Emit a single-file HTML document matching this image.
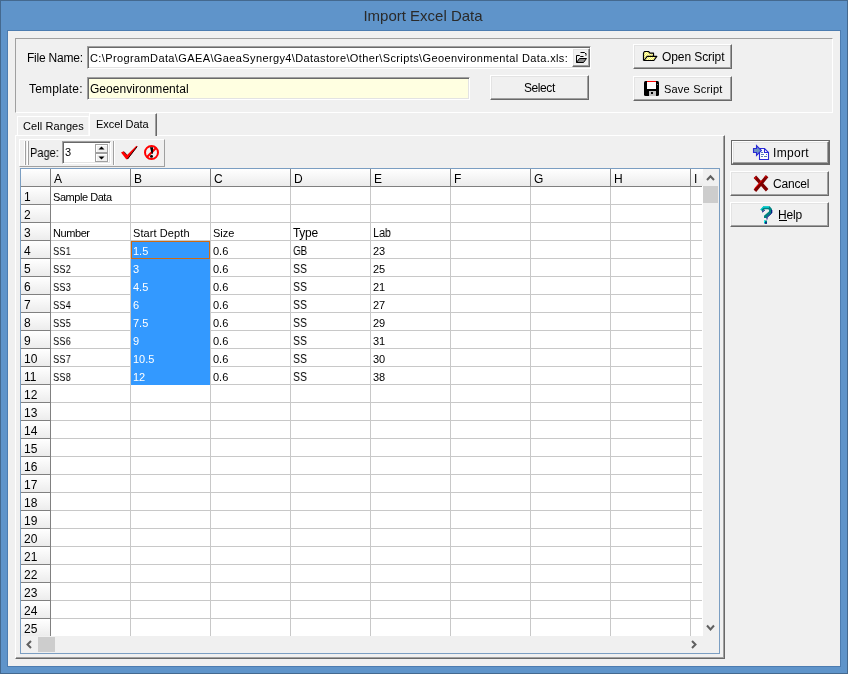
<!DOCTYPE html><html><head><meta charset="utf-8"><style>

*{margin:0;padding:0;box-sizing:border-box}
html,body{width:848px;height:674px;overflow:hidden;background:#f0f0f0}
body{position:relative;font-family:"Liberation Sans",sans-serif;font-size:11px;color:#000}
.abs{position:absolute}
.t{position:absolute;white-space:nowrap;will-change:transform}
.btn{position:absolute;background:#f0f0f0;border-style:solid;border-width:1px;border-color:#fff #696969 #696969 #fff;box-shadow:inset -1px -1px 0 #a0a0a0, inset 1px 1px 0 #e3e3e3}
.sunk{position:absolute;border-style:solid;border-width:1px;border-color:#a0a0a0 #fff #fff #a0a0a0;box-shadow:inset 1px 1px 0 #696969, inset -1px -1px 0 #e3e3e3}
svg{overflow:visible}

</style></head><body>
<div class="abs" style="left:0px;top:0px;width:848px;height:674px;background:#5f94ca;border:1px solid #44698f"></div>
<div class="abs" style="left:7px;top:30px;width:834px;height:637px;background:#f0f0f0;border:1px solid #4c7cb0"></div>
<div class="t" style="left:-1px;width:848px;top:7px;text-align:center;font-size:15px;line-height:18px;color:#2a2a2a">Import Excel Data</div>
<div class="abs" style="left:15px;top:38px;width:818px;height:75px;background:transparent;border-style:solid;border-width:1px;border-color:#a0a0a0 #fff #fff #a0a0a0"></div>
<div class="t" style="left:27px;top:52px;font-size:12px;line-height:12px;letter-spacing:-0.222px;color:#000;">File Name:</div>
<div class="t" style="left:29px;top:83px;font-size:12px;line-height:12px;letter-spacing:0.188px;color:#000;">Template:</div>
<div class="sunk" style="left:87px;top:46px;width:504px;height:23px;background:#fff"></div>
<div class="t" style="left:90px;top:53px;font-size:11px;line-height:11px;letter-spacing:0.384px;color:#000;">C:\ProgramData\GAEA\GaeaSynergy4\Datastore\Other\Scripts\Geoenvironmental Data.xls:</div>
<div class="btn" style="left:572px;top:48px;width:18px;height:19px"></div>
<svg class="abs" style="left:573px;top:49px;" width="16" height="16" viewBox="0 0 16 16">
<path d="M3.5 13.5 V6.5 H6.5 L7.5 7.5 H10.5" fill="none" stroke="#000" stroke-width="1"/>
<path d="M7.5 3.5 H11.5 L13 5" fill="none" stroke="#000" stroke-width="1"/>
<path d="M13.5 4 V6.5 L12 6.5 Z" fill="#000"/>
<path d="M3.5 13.5 L6.5 9.5 H13.5 L10.5 13.5 Z" fill="#8c8c8c" stroke="#000" stroke-width="1" stroke-linejoin="round"/>
</svg>
<div class="sunk" style="left:87px;top:77px;width:383px;height:23px;background:#ffffe1"></div>
<div class="t" style="left:90px;top:83px;font-size:12px;line-height:12px;letter-spacing:0.033px;color:#000;">Geoenvironmental</div>
<div class="btn" style="left:490px;top:75px;width:99px;height:25px"></div>
<div class="t" style="left:524px;top:82px;font-size:12px;line-height:12px;letter-spacing:-0.420px;color:#000;">Select</div>
<div class="btn" style="left:633px;top:44px;width:99px;height:25px"></div>
<div class="btn" style="left:633px;top:76px;width:99px;height:25px"></div>
<svg class="abs" style="left:642px;top:50px;" width="16" height="12" viewBox="0 0 16 12">
<defs><pattern id="dith" width="2" height="2" patternUnits="userSpaceOnUse"><rect width="2" height="2" fill="#f4f060"/><rect width="1" height="1" fill="#ffffd0"/><rect x="1" y="1" width="1" height="1" fill="#ffffd0"/></pattern></defs>
<path d="M1.5 10.5 V3 L2.5 1.5 H6.5 L8 3.2 H11.5 V6.5" fill="url(#dith)" stroke="#000" stroke-width="1.2" stroke-linejoin="round"/>
<path d="M2 10.5 L5.2 6.4 H14.8 L11.8 10.5 Z" fill="url(#dith)" stroke="#000" stroke-width="1.2" stroke-linejoin="round"/>
</svg>
<div class="t" style="left:662px;top:51px;font-size:12px;line-height:12px;letter-spacing:-0.090px;color:#000;">Open Script</div>
<svg class="abs" style="left:644px;top:81px;" width="15" height="15" viewBox="0 0 15 15">
<rect x="0" y="0" width="15" height="15" rx="1.5" fill="#000"/>
<rect x="3" y="0" width="9" height="1" fill="#ff0000"/>
<rect x="3" y="1" width="9" height="7" fill="#fff"/>
<rect x="5" y="10" width="7" height="5" fill="#c0c0c0"/>
<rect x="7" y="11" width="2" height="2" fill="#000"/>
<rect x="13" y="3" width="1" height="1" fill="#808080"/>
</svg>
<div class="t" style="left:664px;top:84px;font-size:11px;line-height:11px;letter-spacing:0.210px;color:#000;">Save Script</div>
<div class="abs" style="left:15px;top:135px;width:710px;height:524px;background:transparent;border-style:solid;border-width:1px;border-color:#fff #696969 #696969 #fff;box-shadow:inset -1px -1px 0 #a0a0a0"></div>
<div class="abs" style="left:17px;top:116px;width:72px;height:19px;background:#f0f0f0;border-style:solid;border-width:1px 1px 0 1px;border-color:#fff #fafafa #fff #fff"></div>
<div class="t" style="left:23px;top:121px;font-size:11px;line-height:11px;letter-spacing:0.090px;color:#000;">Cell Ranges</div>
<div class="abs" style="left:89px;top:113px;width:68px;height:23px;background:#f0f0f0;border-style:solid;border-width:1px 1px 0 1px;border-color:#fff #696969 #fff #fff;box-shadow:inset -1px 0 0 #a0a0a0"></div>
<div class="t" style="left:96px;top:119px;font-size:11px;line-height:11px;letter-spacing:-0.056px;color:#000;">Excel Data</div>
<div class="abs" style="left:19px;top:139px;width:146px;height:28px;background:transparent;border-style:solid;border-width:1px;border-color:#fff #a0a0a0 #a0a0a0 #fff"></div>
<div class="abs" style="left:24px;top:141px;width:1px;height:24px;background:#fff;"></div>
<div class="abs" style="left:25px;top:141px;width:1px;height:24px;background:#a0a0a0;"></div>
<div class="abs" style="left:27px;top:141px;width:1px;height:24px;background:#fff;"></div>
<div class="abs" style="left:28px;top:141px;width:1px;height:24px;background:#a0a0a0;"></div>
<div class="t" style="left:30px;top:147px;font-size:12px;line-height:12px;letter-spacing:0.000px;color:#000;transform:scaleX(0.9194);transform-origin:0px 0;">Page:</div>
<div class="sunk" style="left:62px;top:141px;width:49px;height:23px;background:#fff"></div>
<div class="t" style="left:65px;top:147px;font-size:11px;line-height:11px;letter-spacing:0.000px;color:#000;">3</div>
<div class="abs" style="left:95px;top:144px;width:13px;height:9px;background:#f0f0f0;border:1px solid #a0a0a0;box-shadow:inset 1px 1px 0 #fff"></div>
<svg class="abs" style="left:98px;top:146px;" width="7" height="4" viewBox="0 0 7 4"><path d="M0.5 3.5 L3.5 0.5 L6.5 3.5 Z" fill="#000"/></svg>
<div class="abs" style="left:95px;top:153px;width:13px;height:9px;background:#f0f0f0;border:1px solid #a0a0a0;box-shadow:inset 1px 1px 0 #fff"></div>
<svg class="abs" style="left:98px;top:156px;" width="7" height="4" viewBox="0 0 7 4"><path d="M0.5 0.5 L3.5 3.5 L6.5 0.5 Z" fill="#000"/></svg>
<div class="abs" style="left:113px;top:141px;width:1px;height:24px;background:#a0a0a0;"></div>
<div class="abs" style="left:114px;top:141px;width:1px;height:24px;background:#fff;"></div>
<svg class="abs" style="left:120px;top:145px;" width="18" height="15" viewBox="0 0 18 15">
<path d="M1 7.6 L3.6 6.2 L7 10 L16.4 0.8 L17.4 1.4 L7.6 14.2 L6.2 14.2 Z" fill="#ff0000"/>
<path d="M7.6 14 L17.2 1.6" stroke="#000" stroke-width="0.9" fill="none"/>
<path d="M4 6.6 L6.8 9.8" stroke="#000" stroke-width="0.7" fill="none"/>
</svg>
<svg class="abs" style="left:143px;top:144px;" width="17" height="17" viewBox="0 0 17 17">
<circle cx="8.5" cy="8.5" r="6.5" fill="none" stroke="#ff0000" stroke-width="2"/>
<path d="M13 4 L4 13" stroke="#ff0000" stroke-width="2.2"/>
<path d="M7 3.2 H10 L9.9 9.8 H8.7 Z" fill="#000"/>
<ellipse cx="8.5" cy="12.4" rx="1.5" ry="1.3" fill="#000"/>
</svg>
<div class="abs" style="left:731px;top:140px;width:99px;height:25px;background:transparent;border:1px solid #696969"></div>
<div class="btn" style="left:732px;top:141px;width:97px;height:23px"></div>
<svg class="abs" style="left:752px;top:144px;" width="19" height="17" viewBox="0 0 19 17">
<path d="M7.5 4.5 H12.5 L16.5 8.5 V15.5 H7.5 Z" fill="#fff" stroke="#2a2ad6" stroke-width="1.1" stroke-linejoin="miter"/>
<path d="M12.5 4.5 V8.5 H16.5" fill="none" stroke="#2a2ad6" stroke-width="1.1"/>
<rect x="9" y="8" width="2" height="1" fill="#5b7db8"/>
<rect x="9" y="10" width="3" height="1" fill="#5b7db8"/><rect x="14" y="10" width="1" height="1" fill="#5b7db8"/>
<rect x="9" y="12" width="2" height="1" fill="#5b7db8"/><rect x="12" y="12" width="3" height="1" fill="#5b7db8"/>
<path d="M1.5 4.5 H4.5 V1.6 L9.4 6.5 L4.5 11.4 V8.5 H1.5 Z" fill="#6d92c4" stroke="#2a2ad6" stroke-width="1.1" stroke-linejoin="miter"/>
</svg>
<div class="t" style="left:773px;top:147px;font-size:12px;line-height:12px;letter-spacing:0.300px;color:#000;">Import</div>
<div class="btn" style="left:730px;top:171px;width:99px;height:25px"></div>
<svg class="abs" style="left:753px;top:175px;" width="16" height="17" viewBox="0 0 16 17">
<path d="M3 3 L13 14" stroke="#800000" stroke-width="3.4" stroke-linecap="square"/>
<path d="M13 2.5 L3 14.5" stroke="#800000" stroke-width="3.4" stroke-linecap="square"/>
<path d="M1.8 4 L2.8 2.2 M1.5 13.5 L9 5.3 M11.8 1.5 L13.5 2" stroke="#ff0000" stroke-width="1"/>
</svg>
<div class="t" style="left:773px;top:178px;font-size:12px;line-height:12px;letter-spacing:-0.200px;color:#000;">Cancel</div>
<div class="btn" style="left:730px;top:202px;width:99px;height:25px"></div>
<svg class="abs" style="left:759px;top:206px;" width="14" height="19" viewBox="0 0 14 19">
<path d="M2.5 4.5 L5 1.8 H10 L11.5 3.5 V6 L6.5 10.5 V12" fill="none" stroke="#008080" stroke-width="3" stroke-linejoin="miter"/>
<path d="M1.5 4 L4.5 1 H10" fill="none" stroke="#00ffff" stroke-width="1"/>
<path d="M3 6.2 L5.8 4.2 M12.8 4 V7 L8 11.5 V13.5" fill="none" stroke="#000080" stroke-width="1"/>
<rect x="5" y="14.5" width="3" height="3" fill="#008080"/>
<rect x="5" y="14.5" width="1" height="2" fill="#00ffff"/><rect x="6" y="16.5" width="2" height="1.2" fill="#000080"/>
</svg>
<div class="t" style="left:778px;top:209px;font-size:12px;line-height:12px;letter-spacing:-0.167px;color:#000;">Help</div>
<div class="abs" style="left:779px;top:220px;width:8px;height:1px;background:#000;"></div>
<div class="abs" style="left:20px;top:168px;width:700px;height:486px;background:#f0f0f0;border:1px solid #7b9ec2"></div>
<div class="abs" style="left:21px;top:169px;width:682px;height:467px;background:#fff;"></div>
<div class="abs" style="left:21px;top:169px;width:682px;height:17px;background:linear-gradient(#ffffff,#ececec);"></div>
<div class="abs" style="left:21px;top:187px;width:29px;height:17px;background:linear-gradient(#ffffff,#ececec);"></div>
<div class="abs" style="left:21px;top:205px;width:29px;height:17px;background:linear-gradient(#ffffff,#ececec);"></div>
<div class="abs" style="left:21px;top:223px;width:29px;height:17px;background:linear-gradient(#ffffff,#ececec);"></div>
<div class="abs" style="left:21px;top:241px;width:29px;height:17px;background:linear-gradient(#ffffff,#ececec);"></div>
<div class="abs" style="left:21px;top:259px;width:29px;height:17px;background:linear-gradient(#ffffff,#ececec);"></div>
<div class="abs" style="left:21px;top:277px;width:29px;height:17px;background:linear-gradient(#ffffff,#ececec);"></div>
<div class="abs" style="left:21px;top:295px;width:29px;height:17px;background:linear-gradient(#ffffff,#ececec);"></div>
<div class="abs" style="left:21px;top:313px;width:29px;height:17px;background:linear-gradient(#ffffff,#ececec);"></div>
<div class="abs" style="left:21px;top:331px;width:29px;height:17px;background:linear-gradient(#ffffff,#ececec);"></div>
<div class="abs" style="left:21px;top:349px;width:29px;height:17px;background:linear-gradient(#ffffff,#ececec);"></div>
<div class="abs" style="left:21px;top:367px;width:29px;height:17px;background:linear-gradient(#ffffff,#ececec);"></div>
<div class="abs" style="left:21px;top:385px;width:29px;height:17px;background:linear-gradient(#ffffff,#ececec);"></div>
<div class="abs" style="left:21px;top:403px;width:29px;height:17px;background:linear-gradient(#ffffff,#ececec);"></div>
<div class="abs" style="left:21px;top:421px;width:29px;height:17px;background:linear-gradient(#ffffff,#ececec);"></div>
<div class="abs" style="left:21px;top:439px;width:29px;height:17px;background:linear-gradient(#ffffff,#ececec);"></div>
<div class="abs" style="left:21px;top:457px;width:29px;height:17px;background:linear-gradient(#ffffff,#ececec);"></div>
<div class="abs" style="left:21px;top:475px;width:29px;height:17px;background:linear-gradient(#ffffff,#ececec);"></div>
<div class="abs" style="left:21px;top:493px;width:29px;height:17px;background:linear-gradient(#ffffff,#ececec);"></div>
<div class="abs" style="left:21px;top:511px;width:29px;height:17px;background:linear-gradient(#ffffff,#ececec);"></div>
<div class="abs" style="left:21px;top:529px;width:29px;height:17px;background:linear-gradient(#ffffff,#ececec);"></div>
<div class="abs" style="left:21px;top:547px;width:29px;height:17px;background:linear-gradient(#ffffff,#ececec);"></div>
<div class="abs" style="left:21px;top:565px;width:29px;height:17px;background:linear-gradient(#ffffff,#ececec);"></div>
<div class="abs" style="left:21px;top:583px;width:29px;height:17px;background:linear-gradient(#ffffff,#ececec);"></div>
<div class="abs" style="left:21px;top:601px;width:29px;height:17px;background:linear-gradient(#ffffff,#ececec);"></div>
<div class="abs" style="left:21px;top:619px;width:29px;height:17px;background:linear-gradient(#ffffff,#ececec);"></div>
<div class="abs" style="left:130px;top:187px;width:1px;height:449px;background:#c8c8c8;"></div>
<div class="abs" style="left:130px;top:169px;width:1px;height:17px;background:#808080;"></div>
<div class="abs" style="left:210px;top:187px;width:1px;height:449px;background:#c8c8c8;"></div>
<div class="abs" style="left:210px;top:169px;width:1px;height:17px;background:#808080;"></div>
<div class="abs" style="left:290px;top:187px;width:1px;height:449px;background:#c8c8c8;"></div>
<div class="abs" style="left:290px;top:169px;width:1px;height:17px;background:#808080;"></div>
<div class="abs" style="left:370px;top:187px;width:1px;height:449px;background:#c8c8c8;"></div>
<div class="abs" style="left:370px;top:169px;width:1px;height:17px;background:#808080;"></div>
<div class="abs" style="left:450px;top:187px;width:1px;height:449px;background:#c8c8c8;"></div>
<div class="abs" style="left:450px;top:169px;width:1px;height:17px;background:#808080;"></div>
<div class="abs" style="left:530px;top:187px;width:1px;height:449px;background:#c8c8c8;"></div>
<div class="abs" style="left:530px;top:169px;width:1px;height:17px;background:#808080;"></div>
<div class="abs" style="left:610px;top:187px;width:1px;height:449px;background:#c8c8c8;"></div>
<div class="abs" style="left:610px;top:169px;width:1px;height:17px;background:#808080;"></div>
<div class="abs" style="left:690px;top:187px;width:1px;height:449px;background:#c8c8c8;"></div>
<div class="abs" style="left:690px;top:169px;width:1px;height:17px;background:#808080;"></div>
<div class="abs" style="left:50px;top:169px;width:1px;height:467px;background:#808080;"></div>
<div class="abs" style="left:51px;top:204px;width:651px;height:1px;background:#c8c8c8;"></div>
<div class="abs" style="left:21px;top:204px;width:29px;height:1px;background:#808080;"></div>
<div class="abs" style="left:51px;top:222px;width:651px;height:1px;background:#c8c8c8;"></div>
<div class="abs" style="left:21px;top:222px;width:29px;height:1px;background:#808080;"></div>
<div class="abs" style="left:51px;top:240px;width:651px;height:1px;background:#c8c8c8;"></div>
<div class="abs" style="left:21px;top:240px;width:29px;height:1px;background:#808080;"></div>
<div class="abs" style="left:51px;top:258px;width:651px;height:1px;background:#c8c8c8;"></div>
<div class="abs" style="left:21px;top:258px;width:29px;height:1px;background:#808080;"></div>
<div class="abs" style="left:51px;top:276px;width:651px;height:1px;background:#c8c8c8;"></div>
<div class="abs" style="left:21px;top:276px;width:29px;height:1px;background:#808080;"></div>
<div class="abs" style="left:51px;top:294px;width:651px;height:1px;background:#c8c8c8;"></div>
<div class="abs" style="left:21px;top:294px;width:29px;height:1px;background:#808080;"></div>
<div class="abs" style="left:51px;top:312px;width:651px;height:1px;background:#c8c8c8;"></div>
<div class="abs" style="left:21px;top:312px;width:29px;height:1px;background:#808080;"></div>
<div class="abs" style="left:51px;top:330px;width:651px;height:1px;background:#c8c8c8;"></div>
<div class="abs" style="left:21px;top:330px;width:29px;height:1px;background:#808080;"></div>
<div class="abs" style="left:51px;top:348px;width:651px;height:1px;background:#c8c8c8;"></div>
<div class="abs" style="left:21px;top:348px;width:29px;height:1px;background:#808080;"></div>
<div class="abs" style="left:51px;top:366px;width:651px;height:1px;background:#c8c8c8;"></div>
<div class="abs" style="left:21px;top:366px;width:29px;height:1px;background:#808080;"></div>
<div class="abs" style="left:51px;top:384px;width:651px;height:1px;background:#c8c8c8;"></div>
<div class="abs" style="left:21px;top:384px;width:29px;height:1px;background:#808080;"></div>
<div class="abs" style="left:51px;top:402px;width:651px;height:1px;background:#c8c8c8;"></div>
<div class="abs" style="left:21px;top:402px;width:29px;height:1px;background:#808080;"></div>
<div class="abs" style="left:51px;top:420px;width:651px;height:1px;background:#c8c8c8;"></div>
<div class="abs" style="left:21px;top:420px;width:29px;height:1px;background:#808080;"></div>
<div class="abs" style="left:51px;top:438px;width:651px;height:1px;background:#c8c8c8;"></div>
<div class="abs" style="left:21px;top:438px;width:29px;height:1px;background:#808080;"></div>
<div class="abs" style="left:51px;top:456px;width:651px;height:1px;background:#c8c8c8;"></div>
<div class="abs" style="left:21px;top:456px;width:29px;height:1px;background:#808080;"></div>
<div class="abs" style="left:51px;top:474px;width:651px;height:1px;background:#c8c8c8;"></div>
<div class="abs" style="left:21px;top:474px;width:29px;height:1px;background:#808080;"></div>
<div class="abs" style="left:51px;top:492px;width:651px;height:1px;background:#c8c8c8;"></div>
<div class="abs" style="left:21px;top:492px;width:29px;height:1px;background:#808080;"></div>
<div class="abs" style="left:51px;top:510px;width:651px;height:1px;background:#c8c8c8;"></div>
<div class="abs" style="left:21px;top:510px;width:29px;height:1px;background:#808080;"></div>
<div class="abs" style="left:51px;top:528px;width:651px;height:1px;background:#c8c8c8;"></div>
<div class="abs" style="left:21px;top:528px;width:29px;height:1px;background:#808080;"></div>
<div class="abs" style="left:51px;top:546px;width:651px;height:1px;background:#c8c8c8;"></div>
<div class="abs" style="left:21px;top:546px;width:29px;height:1px;background:#808080;"></div>
<div class="abs" style="left:51px;top:564px;width:651px;height:1px;background:#c8c8c8;"></div>
<div class="abs" style="left:21px;top:564px;width:29px;height:1px;background:#808080;"></div>
<div class="abs" style="left:51px;top:582px;width:651px;height:1px;background:#c8c8c8;"></div>
<div class="abs" style="left:21px;top:582px;width:29px;height:1px;background:#808080;"></div>
<div class="abs" style="left:51px;top:600px;width:651px;height:1px;background:#c8c8c8;"></div>
<div class="abs" style="left:21px;top:600px;width:29px;height:1px;background:#808080;"></div>
<div class="abs" style="left:51px;top:618px;width:651px;height:1px;background:#c8c8c8;"></div>
<div class="abs" style="left:21px;top:618px;width:29px;height:1px;background:#808080;"></div>
<div class="abs" style="left:21px;top:186px;width:681px;height:1px;background:#808080;"></div>
<div class="t" style="left:54px;top:173px;font-size:12px;line-height:12px;letter-spacing:0.000px;color:#000;">A</div>
<div class="t" style="left:134px;top:173px;font-size:12px;line-height:12px;letter-spacing:0.000px;color:#000;">B</div>
<div class="t" style="left:214px;top:173px;font-size:12px;line-height:12px;letter-spacing:0.000px;color:#000;">C</div>
<div class="t" style="left:294px;top:173px;font-size:12px;line-height:12px;letter-spacing:0.000px;color:#000;">D</div>
<div class="t" style="left:374px;top:173px;font-size:12px;line-height:12px;letter-spacing:0.000px;color:#000;">E</div>
<div class="t" style="left:454px;top:173px;font-size:12px;line-height:12px;letter-spacing:0.000px;color:#000;">F</div>
<div class="t" style="left:534px;top:173px;font-size:12px;line-height:12px;letter-spacing:0.000px;color:#000;">G</div>
<div class="t" style="left:614px;top:173px;font-size:12px;line-height:12px;letter-spacing:0.000px;color:#000;">H</div>
<div class="t" style="left:694px;top:173px;font-size:12px;line-height:12px;letter-spacing:0.000px;color:#000;">I</div>
<div class="t" style="left:24px;top:191px;font-size:12px;line-height:12px;letter-spacing:0.000px;color:#000;">1</div>
<div class="t" style="left:24px;top:209px;font-size:12px;line-height:12px;letter-spacing:0.000px;color:#000;">2</div>
<div class="t" style="left:24px;top:227px;font-size:12px;line-height:12px;letter-spacing:0.000px;color:#000;">3</div>
<div class="t" style="left:24px;top:245px;font-size:12px;line-height:12px;letter-spacing:0.000px;color:#000;">4</div>
<div class="t" style="left:24px;top:263px;font-size:12px;line-height:12px;letter-spacing:0.000px;color:#000;">5</div>
<div class="t" style="left:24px;top:281px;font-size:12px;line-height:12px;letter-spacing:0.000px;color:#000;">6</div>
<div class="t" style="left:24px;top:299px;font-size:12px;line-height:12px;letter-spacing:0.000px;color:#000;">7</div>
<div class="t" style="left:24px;top:317px;font-size:12px;line-height:12px;letter-spacing:0.000px;color:#000;">8</div>
<div class="t" style="left:24px;top:335px;font-size:12px;line-height:12px;letter-spacing:0.000px;color:#000;">9</div>
<div class="t" style="left:24px;top:353px;font-size:12px;line-height:12px;letter-spacing:0.000px;color:#000;">10</div>
<div class="t" style="left:24px;top:371px;font-size:12px;line-height:12px;letter-spacing:0.000px;color:#000;">11</div>
<div class="t" style="left:24px;top:389px;font-size:12px;line-height:12px;letter-spacing:0.000px;color:#000;">12</div>
<div class="t" style="left:24px;top:407px;font-size:12px;line-height:12px;letter-spacing:0.000px;color:#000;">13</div>
<div class="t" style="left:24px;top:425px;font-size:12px;line-height:12px;letter-spacing:0.000px;color:#000;">14</div>
<div class="t" style="left:24px;top:443px;font-size:12px;line-height:12px;letter-spacing:0.000px;color:#000;">15</div>
<div class="t" style="left:24px;top:461px;font-size:12px;line-height:12px;letter-spacing:0.000px;color:#000;">16</div>
<div class="t" style="left:24px;top:479px;font-size:12px;line-height:12px;letter-spacing:0.000px;color:#000;">17</div>
<div class="t" style="left:24px;top:497px;font-size:12px;line-height:12px;letter-spacing:0.000px;color:#000;">18</div>
<div class="t" style="left:24px;top:515px;font-size:12px;line-height:12px;letter-spacing:0.000px;color:#000;">19</div>
<div class="t" style="left:24px;top:533px;font-size:12px;line-height:12px;letter-spacing:0.000px;color:#000;">20</div>
<div class="t" style="left:24px;top:551px;font-size:12px;line-height:12px;letter-spacing:0.000px;color:#000;">21</div>
<div class="t" style="left:24px;top:569px;font-size:12px;line-height:12px;letter-spacing:0.000px;color:#000;">22</div>
<div class="t" style="left:24px;top:587px;font-size:12px;line-height:12px;letter-spacing:0.000px;color:#000;">23</div>
<div class="t" style="left:24px;top:605px;font-size:12px;line-height:12px;letter-spacing:0.000px;color:#000;">24</div>
<div class="t" style="left:24px;top:623px;font-size:12px;line-height:12px;letter-spacing:0.000px;color:#000;">25</div>
<div class="abs" style="left:131px;top:241px;width:79px;height:144px;background:#3399ff;"></div>
<div class="abs" style="left:131px;top:241px;width:79px;height:18px;background:transparent;border:1px solid #cc6a14"></div>
<div class="t" style="left:53px;top:192px;font-size:11px;line-height:11px;letter-spacing:-0.450px;color:#000;">Sample Data</div>
<div class="t" style="left:53px;top:228px;font-size:11px;line-height:11px;letter-spacing:-0.420px;color:#000;">Number</div>
<div class="t" style="left:133px;top:228px;font-size:11px;line-height:11px;letter-spacing:0.090px;color:#000;">Start Depth</div>
<div class="t" style="left:213px;top:228px;font-size:11px;line-height:11px;letter-spacing:0.000px;color:#000;">Size</div>
<div class="t" style="left:293px;top:227px;font-size:12px;line-height:12px;letter-spacing:-0.300px;color:#000;">Type</div>
<div class="t" style="left:373px;top:227px;font-size:12px;line-height:12px;letter-spacing:0.000px;color:#000;transform:scaleX(0.9000);transform-origin:0px 0;">Lab</div>
<div class="t" style="left:53px;top:246px;font-size:11px;line-height:11px;letter-spacing:0.000px;color:#000;transform:scaleX(0.8571);transform-origin:0px 0;">SS1</div>
<div class="t" style="left:133px;top:246px;font-size:11px;line-height:11px;letter-spacing:0.000px;color:#fff;">1.5</div>
<div class="t" style="left:213px;top:246px;font-size:11px;line-height:11px;letter-spacing:0.000px;color:#000;">0.6</div>
<div class="t" style="left:293px;top:245px;font-size:12px;line-height:12px;letter-spacing:0.000px;color:#000;transform:scaleX(0.8235);transform-origin:0px 0;">GB</div>
<div class="t" style="left:373px;top:246px;font-size:11px;line-height:11px;letter-spacing:0.000px;color:#000;">23</div>
<div class="t" style="left:53px;top:264px;font-size:11px;line-height:11px;letter-spacing:0.000px;color:#000;transform:scaleX(0.8571);transform-origin:0px 0;">SS2</div>
<div class="t" style="left:133px;top:264px;font-size:11px;line-height:11px;letter-spacing:0.000px;color:#fff;">3</div>
<div class="t" style="left:213px;top:264px;font-size:11px;line-height:11px;letter-spacing:0.000px;color:#000;">0.6</div>
<div class="t" style="left:293px;top:263px;font-size:12px;line-height:12px;letter-spacing:0.000px;color:#000;transform:scaleX(0.8750);transform-origin:0px 0;">SS</div>
<div class="t" style="left:373px;top:264px;font-size:11px;line-height:11px;letter-spacing:0.000px;color:#000;">25</div>
<div class="t" style="left:53px;top:282px;font-size:11px;line-height:11px;letter-spacing:0.000px;color:#000;transform:scaleX(0.8571);transform-origin:0px 0;">SS3</div>
<div class="t" style="left:133px;top:282px;font-size:11px;line-height:11px;letter-spacing:0.000px;color:#fff;">4.5</div>
<div class="t" style="left:213px;top:282px;font-size:11px;line-height:11px;letter-spacing:0.000px;color:#000;">0.6</div>
<div class="t" style="left:293px;top:281px;font-size:12px;line-height:12px;letter-spacing:0.000px;color:#000;transform:scaleX(0.8750);transform-origin:0px 0;">SS</div>
<div class="t" style="left:373px;top:282px;font-size:11px;line-height:11px;letter-spacing:0.000px;color:#000;">21</div>
<div class="t" style="left:53px;top:300px;font-size:11px;line-height:11px;letter-spacing:0.000px;color:#000;transform:scaleX(0.8571);transform-origin:0px 0;">SS4</div>
<div class="t" style="left:133px;top:300px;font-size:11px;line-height:11px;letter-spacing:0.000px;color:#fff;">6</div>
<div class="t" style="left:213px;top:300px;font-size:11px;line-height:11px;letter-spacing:0.000px;color:#000;">0.6</div>
<div class="t" style="left:293px;top:299px;font-size:12px;line-height:12px;letter-spacing:0.000px;color:#000;transform:scaleX(0.8750);transform-origin:0px 0;">SS</div>
<div class="t" style="left:373px;top:300px;font-size:11px;line-height:11px;letter-spacing:0.000px;color:#000;">27</div>
<div class="t" style="left:53px;top:318px;font-size:11px;line-height:11px;letter-spacing:0.000px;color:#000;transform:scaleX(0.8571);transform-origin:0px 0;">SS5</div>
<div class="t" style="left:133px;top:318px;font-size:11px;line-height:11px;letter-spacing:0.000px;color:#fff;">7.5</div>
<div class="t" style="left:213px;top:318px;font-size:11px;line-height:11px;letter-spacing:0.000px;color:#000;">0.6</div>
<div class="t" style="left:293px;top:317px;font-size:12px;line-height:12px;letter-spacing:0.000px;color:#000;transform:scaleX(0.8750);transform-origin:0px 0;">SS</div>
<div class="t" style="left:373px;top:318px;font-size:11px;line-height:11px;letter-spacing:0.000px;color:#000;">29</div>
<div class="t" style="left:53px;top:336px;font-size:11px;line-height:11px;letter-spacing:0.000px;color:#000;transform:scaleX(0.8571);transform-origin:0px 0;">SS6</div>
<div class="t" style="left:133px;top:336px;font-size:11px;line-height:11px;letter-spacing:0.000px;color:#fff;">9</div>
<div class="t" style="left:213px;top:336px;font-size:11px;line-height:11px;letter-spacing:0.000px;color:#000;">0.6</div>
<div class="t" style="left:293px;top:335px;font-size:12px;line-height:12px;letter-spacing:0.000px;color:#000;transform:scaleX(0.8750);transform-origin:0px 0;">SS</div>
<div class="t" style="left:373px;top:336px;font-size:11px;line-height:11px;letter-spacing:0.000px;color:#000;">31</div>
<div class="t" style="left:53px;top:354px;font-size:11px;line-height:11px;letter-spacing:0.000px;color:#000;transform:scaleX(0.8571);transform-origin:0px 0;">SS7</div>
<div class="t" style="left:133px;top:354px;font-size:11px;line-height:11px;letter-spacing:0.000px;color:#fff;">10.5</div>
<div class="t" style="left:213px;top:354px;font-size:11px;line-height:11px;letter-spacing:0.000px;color:#000;">0.6</div>
<div class="t" style="left:293px;top:353px;font-size:12px;line-height:12px;letter-spacing:0.000px;color:#000;transform:scaleX(0.8750);transform-origin:0px 0;">SS</div>
<div class="t" style="left:373px;top:354px;font-size:11px;line-height:11px;letter-spacing:0.000px;color:#000;">30</div>
<div class="t" style="left:53px;top:372px;font-size:11px;line-height:11px;letter-spacing:0.000px;color:#000;transform:scaleX(0.8571);transform-origin:0px 0;">SS8</div>
<div class="t" style="left:133px;top:372px;font-size:11px;line-height:11px;letter-spacing:0.000px;color:#fff;">12</div>
<div class="t" style="left:213px;top:372px;font-size:11px;line-height:11px;letter-spacing:0.000px;color:#000;">0.6</div>
<div class="t" style="left:293px;top:371px;font-size:12px;line-height:12px;letter-spacing:0.000px;color:#000;transform:scaleX(0.8750);transform-origin:0px 0;">SS</div>
<div class="t" style="left:373px;top:372px;font-size:11px;line-height:11px;letter-spacing:0.000px;color:#000;">38</div>
<div class="abs" style="left:703px;top:169px;width:16px;height:484px;background:#f0f0f0;"></div>
<div class="abs" style="left:21px;top:637px;width:682px;height:16px;background:#f0f0f0;"></div>
<div class="abs" style="left:703px;top:186px;width:15px;height:17px;background:#cdcdcd;"></div>
<div class="abs" style="left:38px;top:637px;width:17px;height:15px;background:#cdcdcd;"></div>
<svg class="abs" style="left:706px;top:174px;" width="9" height="7" viewBox="0 0 9 7"><path d="M1 6 L4.5 2.2 L8 6" fill="none" stroke="#606060" stroke-width="2" stroke-linejoin="miter"/></svg>
<svg class="abs" style="left:706px;top:624px;" width="9" height="8" viewBox="0 0 9 8"><path d="M1 1.5 L4.5 5.5 L8 1.5" fill="none" stroke="#606060" stroke-width="2" stroke-linejoin="miter"/></svg>
<svg class="abs" style="left:25px;top:640px;" width="8" height="9" viewBox="0 0 8 9"><path d="M6 1 L2.5 4.5 L6 8" fill="none" stroke="#606060" stroke-width="2" stroke-linejoin="miter"/></svg>
<svg class="abs" style="left:690px;top:640px;" width="8" height="9" viewBox="0 0 8 9"><path d="M2 1 L5.5 4.5 L2 8" fill="none" stroke="#606060" stroke-width="2" stroke-linejoin="miter"/></svg>
</body></html>
